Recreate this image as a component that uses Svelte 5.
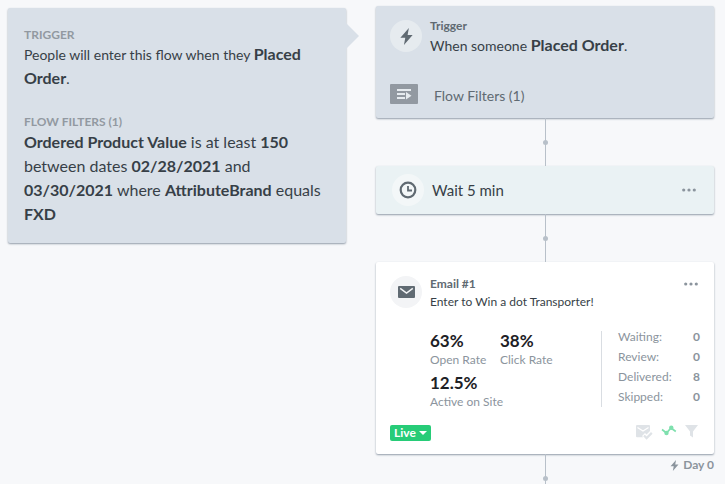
<script>
  const rates = [
    { value: '63%', label: 'Open Rate' },
    { value: '38%', label: 'Click Rate' },
    { value: '12.5%', label: 'Active on Site' }
  ];
  const counts = [
    ['Waiting:', 0],
    ['Review:', 0],
    ['Delivered:', 8],
    ['Skipped:', 0]
  ];
</script>

{#snippet bolt(size)}
  <svg width={size} height={size} viewBox="0 0 14 18" aria-hidden="true">
    <path d="M9.5 0 0.5 10.2h5.2L4.3 18 13.5 7.3H8.2z" fill="currentColor" />
  </svg>
{/snippet}

{#snippet dots()}
  <svg width="14" height="4" viewBox="0 0 14 4" aria-hidden="true">
    <circle cx="1.7" cy="2" r="1.6" /><circle cx="7" cy="2" r="1.6" /><circle cx="12.3" cy="2" r="1.6" />
  </svg>
{/snippet}

<main class="canvas">
  <aside class="panel tinted">
    <h2>TRIGGER</h2>
    <p class="lead">People will enter this flow when they <b>Placed Order</b>.</p>
    <h2>FLOW FILTERS (1)</h2>
    <p>
      <b>Ordered Product Value</b> is at least <b>150</b> between dates <b>02/28/2021</b> and
      <b>03/30/2021</b> where <b>AttributeBrand</b> equals <b>FXD</b>
    </p>
  </aside>

  <section class="flow">
    <article class="card tinted trigger">
      <div class="head">
        <span class="disc">{@render bolt(17)}</span>
        <div class="title">
          <h3>Trigger</h3>
          <p class="lead">When someone <b>Placed Order</b>.</p>
        </div>
      </div>
      <div class="filters">
        <svg width="28" height="20" viewBox="0 0 28 20" aria-hidden="true">
          <rect width="28" height="20" rx="1" fill="#9299a1" />
          <path d="M7 5h14v2H7zM7 9h8v2H7zM7 13h8v2H7zM16 8l5.500 3.700L16 15.500z" fill="#e6ebef" />
        </svg>
        <span>Flow Filters (1)</span>
      </div>
    </article>

    <div class="link"><i></i></div>

    <article class="card wait">
      <span class="disc">
        <svg width="18" height="18" viewBox="0 0 18 18" fill="none" stroke="currentColor" aria-hidden="true">
          <circle cx="9" cy="9" r="7.3" stroke-width="2.2" />
          <path d="M9 5v4.5h4" stroke-width="1.8" />
        </svg>
      </span>
      <span class="delay">Wait 5 min</span>
      <button class="more" aria-label="Wait options">{@render dots()}</button>
    </article>

    <div class="link"><i></i></div>

    <article class="card email">
      <div class="head">
        <span class="disc">
          <svg width="17" height="12" viewBox="0 0 17 12" aria-hidden="true">
            <rect width="17" height="12" rx="1" fill="currentColor" />
            <path d="M2.2 2.3 8.5 7l6.3-4.7" fill="none" stroke="#f3f4f6" stroke-width="1.5" />
          </svg>
        </span>
        <div class="title">
          <h3>Email #1</h3>
          <p class="subject">Enter to Win a dot Transporter!</p>
        </div>
        <button class="more" aria-label="Email options">{@render dots()}</button>
      </div>

      <div class="stats">
        <dl class="rates">
          {#each rates as rate}
            <div><dd>{rate.value}</dd><dt>{rate.label}</dt></div>
          {/each}
        </dl>
        <dl class="counts">
          {#each counts as [label, n]}
            <div><dt>{label}</dt><dd>{n}</dd></div>
          {/each}
        </dl>
      </div>

      <div class="foot">
        <button class="live">Live <svg width="8" height="4" viewBox="0 0 8 4" aria-hidden="true"><path d="M0 0h8L4 4z" fill="#fff" /></svg></button>
        <div class="tools">
          <svg width="17" height="15" viewBox="0 0 17 15" aria-hidden="true">
            <path d="M1 0h12q1 0 1 1v5l-3.500 3.500L9 8 6 11l1.200 1.200H1q-1 0-1-1V1q0-1 1-1z" fill="#dfe3e7" />
            <path d="M1.500 2.500 7 6l5.500-3.500" fill="none" stroke="#fff" stroke-width="1.300" />
            <path d="m8 10.500 2.600 2.600 5.200-5.200" fill="none" stroke="#dfe3e7" stroke-width="2.200" />
          </svg>
          <svg width="16" height="11" viewBox="0 0 16 11" aria-hidden="true">
            <path d="M1 4.500 5.500 8 10 3l4.800 3.500" fill="none" stroke="#7fe0ae" stroke-width="1.700" />
            <circle cx="5.500" cy="8" r="2.200" fill="#7fe0ae" /><circle cx="10.300" cy="2.700" r="2.200" fill="#7fe0ae" />
          </svg>
          <svg width="13" height="13" viewBox="0 0 13 13" aria-hidden="true">
            <path d="M0 0h13L8 6.500V12.500L5 10.500V6.500z" fill="#dfe3e7" />
          </svg>
        </div>
      </div>
    </article>

    <div class="link"><i></i><span class="day">{@render bolt(11)} Day 0</span></div>
  </section>
</main>

<style>
  :global(body) {
    margin: 0;
    background: #f7f8fa;
    overflow: hidden;
  }
  .canvas {
    display: grid;
    grid-template-columns: 1fr 1fr;
    gap: 30px;
    align-items: start;
    padding: 6px 11px 0 8px;
    font: 16px/24px Lato, 'Open Sans', sans-serif;
    color: #373f47;
  }
  h2, h3, p, dl, dd, dt { margin: 0; }
  b {
    font-size: 16px;
    font-weight: 700;
    line-height: 20px;
  }
  button {
    border: 0;
    padding: 0;
    background: none;
    font: inherit;
    cursor: pointer;
  }
  svg { display: block; flex: none; }

  .panel, .card {
    border-radius: 2px;
    box-shadow: 0 1px 2px #929da9;
  }
  .tinted { background: #d9e0e8; }
  .panel {
    position: relative;
    margin-top: 2px;
    padding: 19px 24px 17px 16px;
  }
  .panel::after {
    content: '';
    position: absolute;
    left: 100%;
    top: 15px;
    border: 13px solid transparent;
    border-left-color: #d9e0e8;
    border-right: 0;
  }
  h2 {
    font-size: 12px;
    line-height: 16px;
    color: #9299a1;
  }
  p + h2 { margin-top: 23px; }
  .lead { font-size: 14px; }

  .head { display: flex; }
  .disc {
    display: flex;
    flex: none;
    align-items: center;
    justify-content: center;
    width: 32px;
    height: 32px;
    border-radius: 50%;
    color: #606a72;
  }
  .title { flex: 1; margin-left: 8px; }
  h3 {
    font-size: 12px;
    line-height: 16px;
    color: #606a72;
  }
  .more { height: 8px; align-self: center; }
  .more svg { fill: #8b949d; }

  .trigger { padding: 12px 14px 10px; }
  .trigger .disc { margin-top: 2px; background: #e6ebef; }
  .filters {
    display: flex;
    align-items: center;
    gap: 16px;
    margin-top: 26px;
    font-size: 14px;
    color: #606a72;
  }
  .filters svg { align-self: flex-start; }

  .link {
    position: relative;
    display: flex;
    align-items: center;
    justify-content: center;
    height: 48px;
    background: linear-gradient(#b8c0c9, #b8c0c9) center / 1px 100% no-repeat;
  }
  .link i {
    width: 5px;
    height: 5px;
    border-radius: 50%;
    background: #b8c0c9;
  }
  .day {
    position: absolute;
    right: 0;
    top: 1px;
    display: flex;
    align-items: center;
    gap: 3px;
    font-size: 12px;
    line-height: 20px;
    font-weight: 700;
    color: #8b949d;
  }

  .wait {
    display: flex;
    align-items: center;
    padding: 8px 18px 8px 16px;
    background: #eaf2f4;
  }
  .wait .disc { background: #f3f7f8; }
  .delay { flex: 1; margin-left: 8px; font-size: 15px; }

  .email {
    padding: 14px 14px 13px;
    background: #fff;
  }
  .email .disc { background: #f3f4f6; }
  .email .more { align-self: flex-start; margin: 4px 2px 0 0; }
  .subject { font-size: 12px; line-height: 20px; }
  .stats {
    display: flex;
    align-items: flex-start;
    justify-content: space-between;
    margin: 19px 0 14px 40px;
  }
  .rates {
    display: grid;
    grid-template-columns: 70px 70px;
    row-gap: 4px;
    white-space: nowrap;
  }
  .rates div { display: flex; flex-direction: column; }
  .rates dd {
    font-size: 17px;
    font-weight: 700;
    line-height: 20px;
    color: #1d2125;
  }
  .rates dt {
    font-size: 12px;
    line-height: 18px;
    color: #8b949d;
  }
  .counts {
    display: flex;
    flex-direction: column;
    gap: 8px;
    width: 82px;
    padding: 0 0 4px 16px;
    border-left: 1px solid #d9dde2;
    font-size: 12px;
    line-height: 12px;
    color: #8b949d;
  }
  .counts div { display: flex; justify-content: space-between; }
  .counts dd { font-weight: 700; }
  .foot {
    display: flex;
    align-items: flex-start;
    justify-content: space-between;
  }
  .live {
    display: flex;
    align-items: center;
    gap: 3px;
    padding: 0 4px;
    border-radius: 2px;
    background: #27cc78;
    color: #fff;
    font-size: 12px;
    font-weight: 700;
    line-height: 16px;
  }
  .tools {
    display: flex;
    gap: 8px;
    padding-right: 2px;
  }
</style>
